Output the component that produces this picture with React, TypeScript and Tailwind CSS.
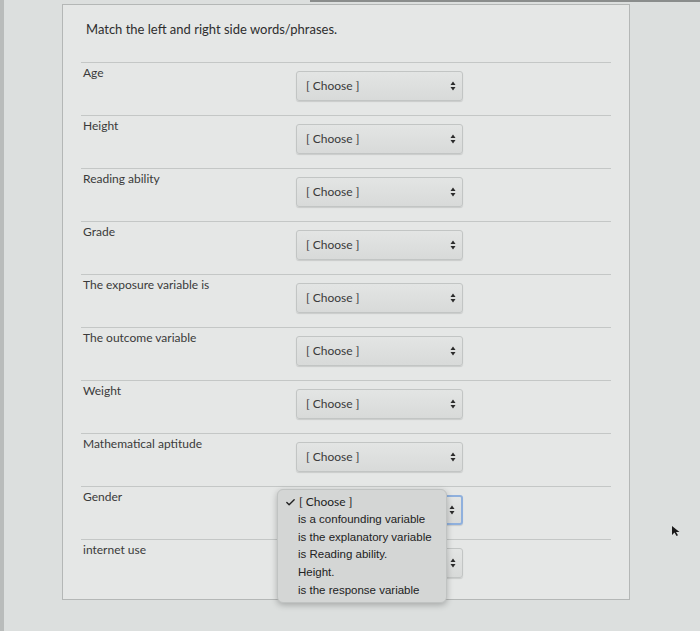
import { Check } from "lucide-react";

const ROWS = [
  "Age",
  "Height",
  "Reading ability",
  "Grade",
  "The exposure variable is",
  "The outcome variable",
  "Weight",
  "Mathematical aptitude",
  "Gender",
  "internet use",
];

const OPTIONS = [
  "is a confounding variable",
  "is the explanatory variable",
  "is Reading ability.",
  "Height.",
  "is the response variable",
];

const Arrows = () => (
  <svg width="6" height="10" viewBox="0 0 6 10" className="text-[#2b2b2b]">
    <path d="M3 0.5 L5.5 4 L0.5 4 Z" fill="currentColor" />
    <path d="M3 9.5 L5.5 6 L0.5 6 Z" fill="currentColor" />
  </svg>
);

// covered = sits under the open menu, so its label can't be seen
const Select = ({ focused, covered }: { focused?: boolean; covered?: boolean }) => (
  <div
    className={
      "mt-[8px] w-[167px] h-[30px] rounded-[3px] flex items-center justify-between pl-[9px] pr-[6px] bg-gradient-to-b from-[#e3e5e4] to-[#d8dad9] shadow-[0_1px_1px_rgba(0,0,0,0.12)] " +
      (focused ? "border-2 border-[#8fb0dd]" : "border border-[#c2c5c4]")
    }
  >
    <span className={"text-[12px] text-[#3a3a3a] " + (covered ? "invisible" : "")}>[ Choose ]</span>
    <Arrows />
  </div>
);

export default function App() {
  return (
    <div className="relative w-[700px] h-[631px] overflow-hidden bg-[#dcdfde] font-['Lato',sans-serif]">
      <div className="absolute left-0 top-0 w-[4px] h-full bg-[#b9bcbb]" />
      <div className="absolute left-[310px] top-0 w-[390px] h-[2px] bg-[#8a8d8c]" />

      <div className="ml-[62px] mt-[4px] w-[568px] h-[596px] border border-[#b4b7b6] bg-[#e5e7e6] px-[18px]">
        <div className="h-[57px] pt-[15px] pl-[5px] text-[13px] text-[#2e2e2e]">
          Match the left and right side words/phrases.
        </div>
        {ROWS.map((label, i) => (
          <div key={label} className="h-[53px] flex border-t border-[#c4c7c6]">
            <div className="w-[215px] pt-[1px] pl-[2px] text-[12px] text-[#3a3a3a]">{label}</div>
            <Select focused={i === 8} covered={i >= 8} />
          </div>
        ))}
      </div>

      {/* open dropdown menu */}
      <div className="absolute left-[277px] top-[489px] w-[170px] h-[114px] rounded-[6px] bg-[#d4d6d5] shadow-[0_2px_6px_rgba(0,0,0,0.25)] border border-[#c0c3c2] pt-[3px] font-['Liberation_Sans',Arial,sans-serif] text-[11.5px] text-[#222]">
        <div className="h-[18px] flex items-center pl-[7px]">
          <Check size={11} strokeWidth={3} className="mr-[3px]" />
          <span className="font-['Lato',sans-serif] text-[12px]">[ Choose ]</span>
        </div>
        {OPTIONS.map((o) => (
          <div key={o} className="h-[17.6px] flex items-center pl-[20px]">
            {o}
          </div>
        ))}
      </div>

      <svg className="absolute left-[671px] top-[525px]" width="10" height="12" viewBox="0 0 10 12">
        <path d="M1 1 L1 10 L3.5 7.5 L5.5 11 L7 10.3 L5 7 L8.5 7 Z" fill="#1a1a1a" />
      </svg>
    </div>
  );
}
